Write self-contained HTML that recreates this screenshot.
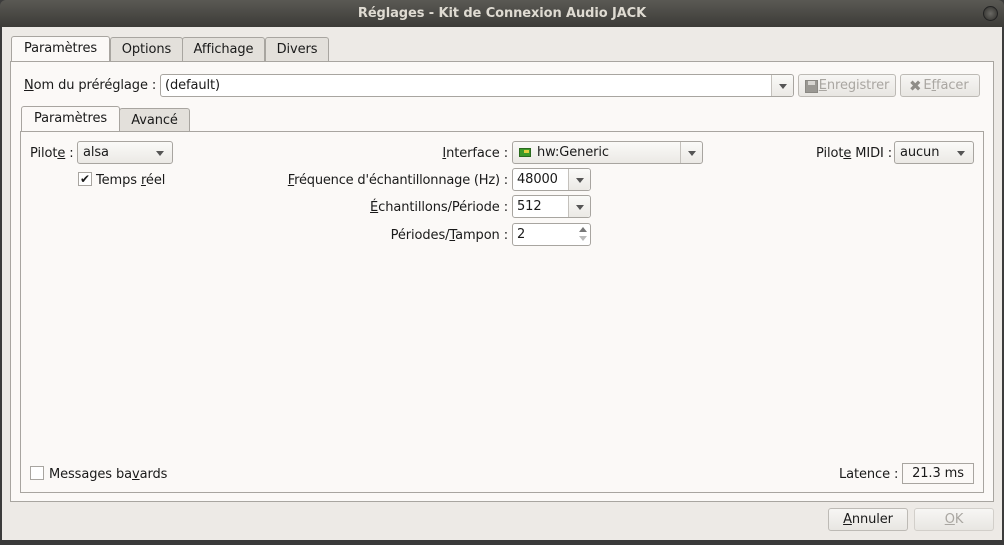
<!DOCTYPE html>
<html><head><meta charset="utf-8"><style>
*{box-sizing:border-box;margin:0;padding:0}
body{width:1004px;height:545px;overflow:hidden;background:#3c3c3c;font-family:"DejaVu Sans","Liberation Sans",sans-serif;font-size:13px;color:#1a1a1a;position:relative;letter-spacing:-0.1px}
.a{position:absolute;white-space:nowrap}
.t{margin-top:1px}
#title{left:0;top:0;width:1004px;height:27px;background:linear-gradient(#5a5954,#3c3b37);border-radius:6px 6px 0 0;color:#dfdbd2;font-weight:bold;font-size:13px;text-align:center;line-height:27px}
#win{left:2px;top:27px;width:1000px;height:513px;background:#edeae6}
.tab{position:absolute;height:24px;border:1px solid #a8a5a0;border-bottom:none;background:#e3e0db;border-radius:3px 3px 0 0;line-height:24px;text-align:center}
.tab.on{background:#fbf9f7;height:25px;z-index:2}
.panel{position:absolute;border:1px solid #a8a5a0;background:#fbf9f7}
.combo{position:absolute;height:23px;border:1px solid #a8a5a0;border-radius:3px;background:linear-gradient(#fafaf8,#ebe9e5);line-height:22px;padding-left:5px}
.combo:after{content:"";position:absolute;right:8px;top:9px;border:4px solid transparent;border-top:5px solid #555;border-bottom:none}
.edit{position:absolute;height:23px;border:1px solid #a8a5a0;border-radius:3px;background:#fff;line-height:22px;padding-left:4px}
.dd{position:absolute;right:0;top:0;width:22px;height:21px;border-left:1px solid #c4c1bc;background:linear-gradient(#fafaf8,#ebe9e5);border-radius:0 3px 3px 0}
.dd:after{content:"";position:absolute;left:7px;top:9px;border:4px solid transparent;border-top:5px solid #555;border-bottom:none}
.btn{position:absolute;height:23px;border:1px solid #bdbab5;border-radius:3px;background:linear-gradient(#f7f6f4,#e8e6e2);line-height:22px;text-align:center}
.dis{color:#a9a6a1}
u{text-decoration:underline}
.r{text-align:right}
</style></head><body>
<div class="a" id="title">Réglages - Kit de Connexion Audio JACK</div>
<div class="a" style="right:6px;top:6px;width:15px;height:15px;border-radius:50%;background:radial-gradient(#6a6964,#2e2d2a);border:1px solid #222"></div>
<div class="a" id="win"></div>
<div class="a" style="left:0;top:540px;width:1004px;height:5px;background:#3a3a3a"></div>

<div class="panel" style="left:10px;top:61px;width:984px;height:441px"></div>
<div class="tab on" style="left:11px;top:36px;width:99px">Paramètres</div>
<div class="tab" style="left:110px;top:37px;width:73px">Options</div>
<div class="tab" style="left:182px;top:37px;width:83px">Affichage</div>
<div class="tab" style="left:265px;top:37px;width:64px">Divers</div>

<div class="a t" style="left:24px;top:77px"><u>N</u>om du préréglage :</div>
<div class="edit" style="left:160px;top:74px;width:634px">(default)<div class="dd"></div></div>
<div class="btn dis" style="left:798px;top:74px;width:98px;padding-left:14px">
<span style="position:absolute;left:6px;top:5px;width:13px;height:13px;background:#9a9893;border:1px solid #8a8883"><span style="position:absolute;left:2px;top:0;width:7px;height:4px;background:#d8d6d2"></span></span><u>E</u>nregistrer</div>
<div class="btn dis" style="left:900px;top:74px;width:80px;padding-left:12px">
<span style="position:absolute;left:8px;top:0;color:#8f8d88;font-weight:bold;font-size:15px">✖</span>E<u>f</u>facer</div>

<div class="panel" style="left:20px;top:131px;width:964px;height:362px"></div>
<div class="tab on" style="left:21px;top:106px;width:99px">Paramètres</div>
<div class="tab" style="left:119px;top:108px;width:71px;height:23px">Avancé</div>

<div class="a t" style="left:30px;top:145px">Pilot<u>e</u> :</div>
<div class="combo" style="left:77px;top:141px;width:96px">alsa</div>
<div class="a" style="left:78px;top:172px;width:14px;height:14px;border:1px solid #a8a5a0;background:#fff;font-size:12px;line-height:12px;text-align:center;font-weight:bold">✔</div>
<div class="a t" style="left:96px;top:172px">Temps <u>r</u>éel</div>

<div class="a r t" style="right:496px;top:145px"><u>I</u>nterface :</div>
<div class="edit" style="left:512px;top:141px;width:191px;background:linear-gradient(#fafaf8,#ebe9e5);padding-left:24px">hw:Generic<div class="dd"></div>
<span style="position:absolute;left:6px;top:6px;width:12px;height:9px;background:#3c9a2a;border:1px solid #2a6a1e"><span style="position:absolute;left:4px;top:1px;width:5px;height:3px;background:#e0d040"></span></span></div>

<div class="a r t" style="right:496px;top:172px;letter-spacing:-0.2px"><u>F</u>réquence d'échantillonnage (Hz) :</div>
<div class="edit" style="left:512px;top:168px;width:79px">48000<div class="dd"></div></div>
<div class="a r t" style="right:496px;top:199px"><u>É</u>chantillons/Période :</div>
<div class="edit" style="left:512px;top:195px;width:79px">512<div class="dd"></div></div>
<div class="a r t" style="right:496px;top:227px">Périodes/<u>T</u>ampon :</div>
<div class="edit" style="left:512px;top:223px;width:79px">2
<span style="position:absolute;right:3px;top:3px;border:4px solid transparent;border-bottom:5px solid #777;border-top:none"></span>
<span style="position:absolute;right:3px;top:12px;border:4px solid transparent;border-top:5px solid #bbb;border-bottom:none"></span></div>

<div class="a t" style="left:816px;top:145px">Pilot<u>e</u> MIDI :</div>
<div class="combo" style="left:894px;top:141px;width:80px">aucun</div>

<div class="a" style="left:30px;top:466px;width:14px;height:14px;border:1px solid #a8a5a0;background:#fff"></div>
<div class="a t" style="left:49px;top:466px">Messages ba<u>v</u>ards</div>
<div class="a t" style="left:839px;top:466px">Latence :</div>
<div class="a" style="left:902px;top:463px;width:72px;height:21px;border:1px solid #a8a5a0;background:#fbf9f7;text-align:center;line-height:20px">21.3 ms</div>

<div class="btn" style="left:828px;top:508px;width:80px"><u>A</u>nnuler</div>
<div class="btn dis" style="left:914px;top:508px;width:80px;border-color:#d2cfca"><u>O</u>K</div>
</body></html>
